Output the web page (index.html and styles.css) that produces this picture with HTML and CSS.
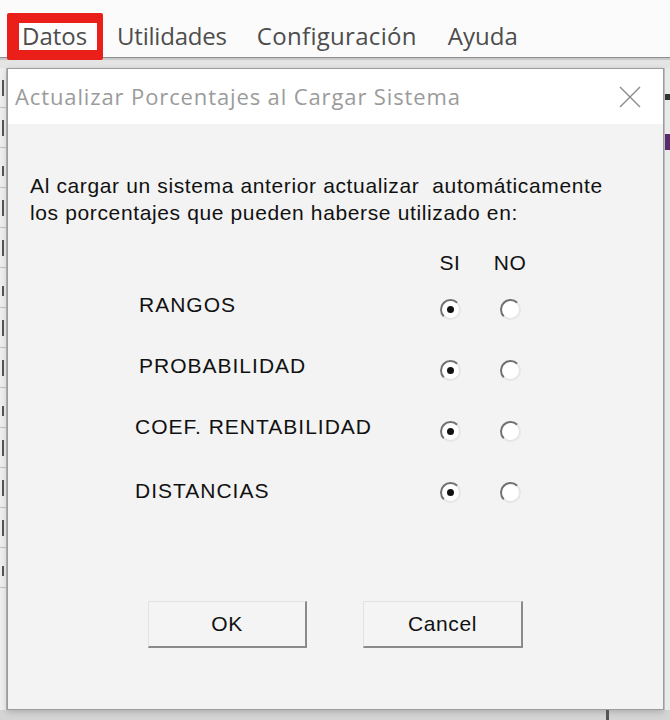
FILE: index.html
```html
<!DOCTYPE html>
<html lang="es">
<head>
<meta charset="utf-8">
<title>Actualizar Porcentajes al Cargar Sistema</title>
<link rel="stylesheet" href="styles.css">
</head>
<body>
<div class="menubar">
  <div class="menu-sel"><span class="menu-item">Datos</span></div>
  <span class="menu-item first">Utilidades</span>
  <span class="menu-item narrow">Configuración</span>
  <span class="menu-item">Ayuda</span>
</div>
<div class="desk">
  <div class="strip-left">
    <i class="mark"></i><i class="mark"></i><i class="mark short"></i><i class="mark"></i><i class="mark"></i><i class="mark short"></i><i class="mark"></i><i class="mark"></i><i class="mark short"></i><i class="mark"></i><i class="mark"></i><i class="mark"></i><i class="mark short"></i>
  </div>
  <div class="dialog">
    <div class="titlebar">
      <span class="title">Actualizar Porcentajes al Cargar Sistema</span>
      <svg class="close" width="22" height="22" viewBox="0 0 22 22"><path d="M1 1 L21 21 M21 1 L1 21" stroke="#8a8a8a" stroke-width="1.4" fill="none"/></svg>
    </div>
    <div class="body">
      <p class="intro">Al cargar un sistema anterior actualizar&nbsp; automáticamente<br>los porcentajes que pueden haberse utilizado en:</p>
      <div class="options">
        <div class="row head"><span class="label"></span><span class="cell">SI</span><span class="cell">NO</span></div>
        <div class="row"><span class="label">RANGOS</span><span class="cell"><span class="radio on"></span></span><span class="cell"><span class="radio"></span></span></div>
        <div class="row"><span class="label">PROBABILIDAD</span><span class="cell"><span class="radio on"></span></span><span class="cell"><span class="radio"></span></span></div>
        <div class="row shift"><span class="label">COEF. RENTABILIDAD</span><span class="cell"><span class="radio on"></span></span><span class="cell"><span class="radio"></span></span></div>
        <div class="row shift last"><span class="label">DISTANCIAS</span><span class="cell"><span class="radio on"></span></span><span class="cell"><span class="radio"></span></span></div>
      </div>
      <div class="buttons">
        <button class="btn">OK</button>
        <button class="btn cancel">Cancel</button>
      </div>
    </div>
  </div>
  <div class="strip-right"><i class="rmark"></i><i class="rmark purple"></i></div>
</div>
<div class="bottom"><span class="bottom-line"></span></div>
</body>
</html>
```
FILE: styles.css
```css
html, body {
  margin: 0;
  padding: 0;
}
body {
  width: 670px;
  height: 720px;
  overflow: hidden;
  background: #d9d9d9;
  font-family: "Liberation Sans", Arial, sans-serif;
}
.menubar {
  height: 60px;
  display: flex;
  align-items: flex-start;
  background: linear-gradient(to bottom, #fbfbfb 0, #fbfbfb 57px, #8e8e8e 57px, #8e8e8e 58px, #c9c9c9 58px, #c9c9c9 60px);
}
.menu-item {
  font-family: "Open Sans", "Noto Sans", sans-serif;
  font-size: 24px;
  color: #4d4d4d;
  line-height: 32px;
  margin-top: 20px;
  margin-left: 31px;
}
.menu-item.first {
  margin-left: 14px;
  letter-spacing: -0.2px;
}
.menu-item.narrow {
  margin-left: 30px;
  letter-spacing: 0.3px;
}
.menu-sel {
  margin-left: 7px;
  margin-top: 13px;
  width: 96px;
  height: 47px;
  box-sizing: border-box;
  border-style: solid;
  border-color: #ea1f1a;
  border-width: 10px 6px 10px 12px;
  border-radius: 2px;
  background: #fdfdfd;
  display: flex;
}
.menu-sel .menu-item {
  margin: -3px 0 0 3px;
}
.desk {
  height: 650px;
  display: flex;
  background: #e4e4e4;
}
.strip-left {
  width: 7px;
  margin-top: 8px;
  overflow: hidden;
  display: flex;
  flex-direction: column;
  background: #ededed;
  border-right: 1px solid #b8b8b8;
  box-sizing: border-box;
}
.mark {
  display: block;
  height: 40px;
  box-sizing: border-box;
  border-bottom: 1px solid #c4c4c4;
  background: linear-gradient(to right, transparent 0, transparent 2px, #555 2px, #555 4px, transparent 4px) no-repeat 0 12px / 6px 16px;
}
.mark.short {
  background-size: 6px 10px;
  background-position: 0 18px;
}
.dialog {
  width: 657px;
  height: 642px;
  margin-top: 8px;
  box-sizing: border-box;
  border: 1px solid #9c9c9c;
  background: #f3f3f3;
  display: flex;
  flex-direction: column;
  box-shadow: 0 2px 6px rgba(0,0,0,0.18);
}
.titlebar {
  height: 55px;
  flex: none;
  background: #ffffff;
  display: flex;
  align-items: center;
  justify-content: space-between;
  padding: 0 22px 0 7px;
}
.title {
  font-family: "Open Sans", "Noto Sans", sans-serif;
  font-size: 22px;
  letter-spacing: 0.88px;
  color: #9b9b9b;
  margin-top: -1px;
}
.close {
  display: block;
  margin-top: 1px;
}
.body {
  flex: 1;
  display: flex;
  flex-direction: column;
  padding: 48px 0 0 22px;
}
.intro {
  margin: 0;
  font-size: 21px;
  letter-spacing: 0.63px;
  line-height: 27px;
  color: #111;
  white-space: nowrap;
}
.options {
  margin-top: 23px;
  margin-left: 109px;
}
.row {
  display: flex;
  height: 61px;
  align-items: center;
}
.row.head {
  height: 27px;
}
.row.shift {
  margin-left: -4px;
}
.label {
  width: 281px;
  font-size: 21px;
  letter-spacing: 1px;
  color: #111;
  margin-top: -4px;
  white-space: nowrap;
}
.row.shift .label {
  width: 285px;
}
.row.last .label {
  margin-top: 2px;
}
.cell {
  width: 60px;
  display: flex;
  justify-content: center;
  font-size: 21px;
  letter-spacing: 0.6px;
  color: #111;
}
.radio {
  width: 21px;
  height: 21px;
  box-sizing: border-box;
  border-radius: 50%;
  border: 2px solid;
  border-color: #707070 #e6e6e6 #e6e6e6 #707070;
  background: #ffffff;
  margin-top: 5px;
  display: flex;
  align-items: center;
  justify-content: center;
}
.radio.on::after {
  content: "";
  width: 7px;
  height: 7px;
  border-radius: 50%;
  background: #111;
}
.buttons {
  display: flex;
  margin-top: 81px;
  margin-left: 118px;
  gap: 56px;
}
.btn {
  width: 159px;
  height: 47px;
  box-sizing: border-box;
  font-family: "Liberation Sans", Arial, sans-serif;
  font-size: 21px;
  letter-spacing: 0.6px;
  color: #111;
  background: #f4f4f4;
  border-style: solid;
  border-width: 1px 2px 2px 1px;
  border-color: #e2e2e2 #8a8a8a #8a8a8a #e2e2e2;
  padding: 0;
}
.btn.cancel {
  width: 160px;
}
.strip-right {
  width: 6px;
  margin-top: 8px;
  background: #e9e9e9;
  border-left: 1px solid #bdbdbd;
  box-sizing: border-box;
  display: flex;
  flex-direction: column;
}
.rmark {
  display: block;
  height: 6px;
  margin-top: 26px;
  background: #333;
}
.rmark.purple {
  height: 16px;
  margin-top: 34px;
  background: #5a2a6a;
}
.bottom {
  height: 10px;
  background: #d4d4d4;
  display: flex;
}
.bottom-line {
  width: 3px;
  height: 10px;
  margin-left: 606px;
  background: #555;
}
```
